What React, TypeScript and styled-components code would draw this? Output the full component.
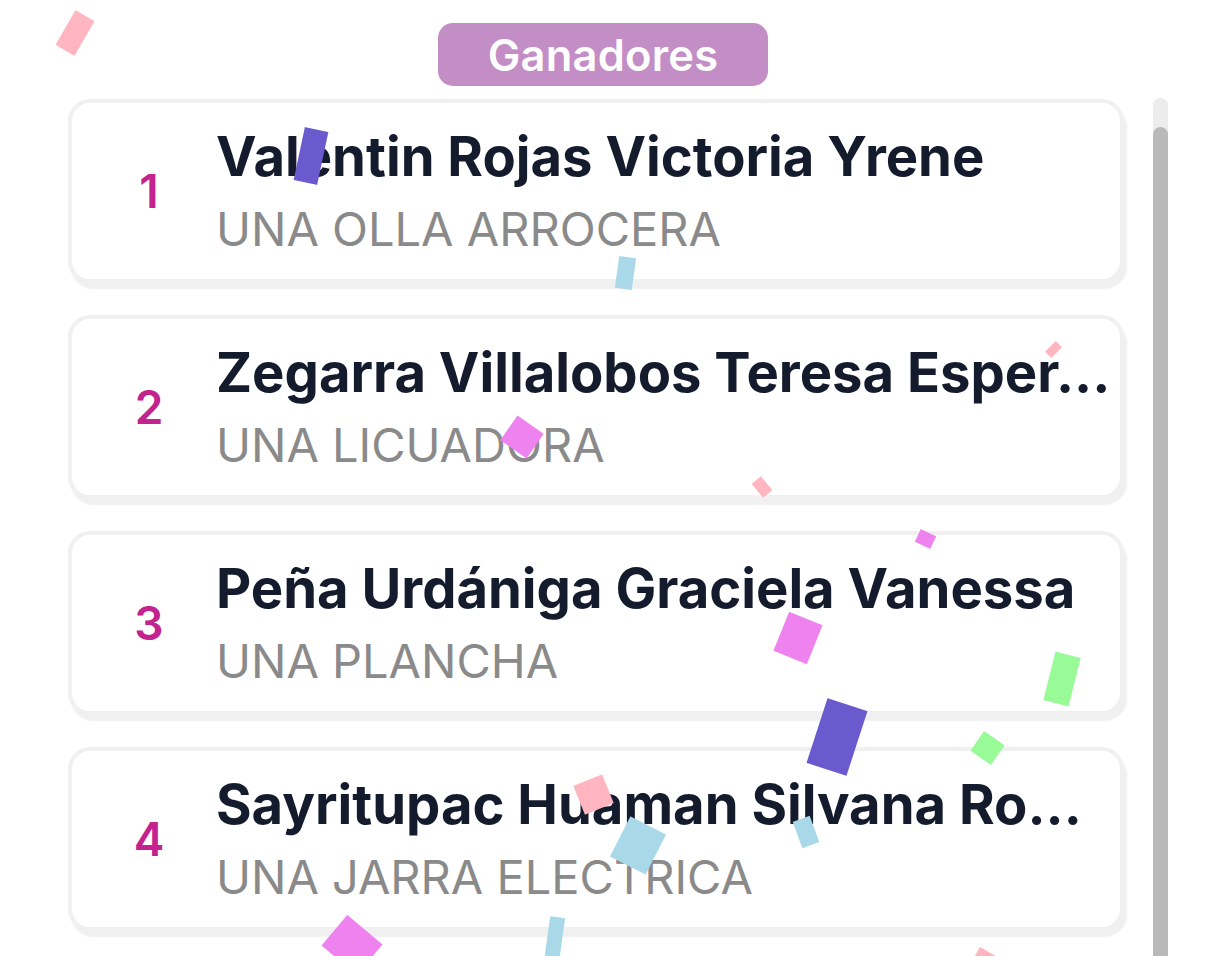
import React from "react";
import styled, { createGlobalStyle } from "styled-components";

const GlobalStyle = createGlobalStyle`
  html, body {
    margin: 0;
    padding: 0;
    overflow: hidden;
    background: #ffffff;
    font-family: "Inter", "Noto Sans", sans-serif;
  }
`;

const Page = styled.div`
  position: relative;
  height: 956px;
  padding: 23px 45px 0 38px;
  display: flex;
  flex-direction: column;
  gap: 13px;
`;

const HeaderRow = styled.div`
  display: flex;
  justify-content: center;
`;

const Pill = styled.div`
  width: 330px;
  height: 63px;
  border-radius: 15px;
  background: #c38dc5;
  color: #ffffff;
  font-weight: 600;
  font-size: 43.5px;
  display: flex;
  align-items: center;
  justify-content: center;
  letter-spacing: 0.2px;
`;

const Body = styled.div`
  display: flex;
  gap: 29px;
  padding-left: 30px;
`;

const List = styled.div`
  flex: 1;
  min-width: 0;
  display: flex;
  flex-direction: column;
  gap: 32px;
`;

const Card = styled.div`
  height: 184px;
  box-sizing: border-box;
  border: 4px solid #f0f0f0;
  border-radius: 22px;
  box-shadow: 3px 6px 2px #f0f0f0;
  background: #ffffff;
  display: flex;
  align-items: center;
  padding-left: 10px;
  padding-right: 14px;
`;

const Rank = styled.div`
  width: 134px;
  flex-shrink: 0;
  text-align: center;
  color: #c4228e;
  font-weight: 600;
  font-size: 46px;
  line-height: 1;
`;

const Info = styled.div`
  flex: 1;
  min-width: 0;
  display: flex;
  flex-direction: column;
  gap: 10px;
`;

const Name = styled.div`
  font-weight: 700;
  font-size: 54.4px;
  line-height: 66px;
  color: #141b2d;
  white-space: nowrap;
`;

const Prize = styled.div`
  font-weight: 400;
  font-size: 47px;
  line-height: 60px;
  color: #8a8a8a;
  white-space: nowrap;
`;

const Track = styled.div`
  width: 15px;
  flex-shrink: 0;
  height: 900px;
  margin-top: -1px;
  border-radius: 8px;
  background: #ececec;
  padding-top: 29px;
  box-sizing: border-box;
`;

const Thumb = styled.div`
  height: 100%;
  border-radius: 8px 8px 0 0;
  background: #b9b9b9;
`;

const ConfettiLayer = styled.div`
  position: absolute;
  inset: 0;
  pointer-events: none;
  overflow: hidden;
`;

const Piece = styled.div<{ $x: number; $y: number; $w: number; $h: number; $r: number; $c: string }>`
  position: absolute;
  left: ${(p) => p.$x - p.$w / 2}px;
  top: ${(p) => p.$y - p.$h / 2}px;
  width: ${(p) => p.$w}px;
  height: ${(p) => p.$h}px;
  background: ${(p) => p.$c};
  transform: rotate(${(p) => p.$r}deg);
  filter: blur(0.6px);
`;

const PINK = "#ffb6c1";
const SLATE = "#6a5acd";
const BLUE = "#a9d8e8";
const VIOLET = "#ee82ee";
const GREEN = "#98fb98";

const confetti: { x: number; y: number; w: number; h: number; r: number; c: string }[] = [
  { x: 75, y: 33, w: 22, h: 40, r: 30, c: PINK },
  { x: 311, y: 156, w: 24, h: 54, r: 12, c: SLATE },
  { x: 625, y: 273, w: 17, h: 32, r: 8, c: BLUE },
  { x: 1053, y: 349, w: 9, h: 15, r: 45, c: PINK },
  { x: 522, y: 437, w: 32, h: 30, r: 35, c: VIOLET },
  { x: 762, y: 487, w: 12, h: 18, r: -40, c: PINK },
  { x: 925, y: 539, w: 17, h: 14, r: 25, c: VIOLET },
  { x: 798, y: 638, w: 36, h: 42, r: 22, c: VIOLET },
  { x: 1062, y: 679, w: 26, h: 50, r: 14, c: GREEN },
  { x: 837, y: 737, w: 42, h: 68, r: 18, c: SLATE },
  { x: 987, y: 748, w: 25, h: 24, r: 35, c: GREEN },
  { x: 593, y: 794, w: 31, h: 31, r: -22, c: PINK },
  { x: 638, y: 845, w: 40, h: 45, r: 27, c: BLUE },
  { x: 806, y: 832, w: 18, h: 28, r: -20, c: BLUE },
  { x: 352, y: 945, w: 46, h: 40, r: 40, c: VIOLET },
  { x: 554, y: 940, w: 15, h: 46, r: 8, c: BLUE },
  { x: 984, y: 962, w: 22, h: 22, r: 30, c: PINK },
];

const winners = [
  { name: "Valentin Rojas Victoria Yrene", prize: "UNA OLLA ARROCERA" },
  { name: "Zegarra Villalobos Teresa Esper...", prize: "UNA LICUADORA" },
  { name: "Peña Urdániga Graciela Vanessa", prize: "UNA PLANCHA" },
  { name: "Sayritupac Huaman Silvana Ro...", prize: "UNA JARRA ELECTRICA" },
];

export default function App() {
  return (
    <>
      <GlobalStyle />
      <Page>
        <HeaderRow>
          <Pill>Ganadores</Pill>
        </HeaderRow>
        <Body>
          <List>
            {winners.map((w, i) => (
              <Card key={i}>
                <Rank>{i + 1}</Rank>
                <Info>
                  <Name>{w.name}</Name>
                  <Prize>{w.prize}</Prize>
                </Info>
              </Card>
            ))}
          </List>
          <Track>
            <Thumb />
          </Track>
        </Body>
        <ConfettiLayer>
          {confetti.map((p, i) => (
            <Piece key={i} $x={p.x} $y={p.y} $w={p.w} $h={p.h} $r={p.r} $c={p.c} />
          ))}
        </ConfettiLayer>
      </Page>
    </>
  );
}
